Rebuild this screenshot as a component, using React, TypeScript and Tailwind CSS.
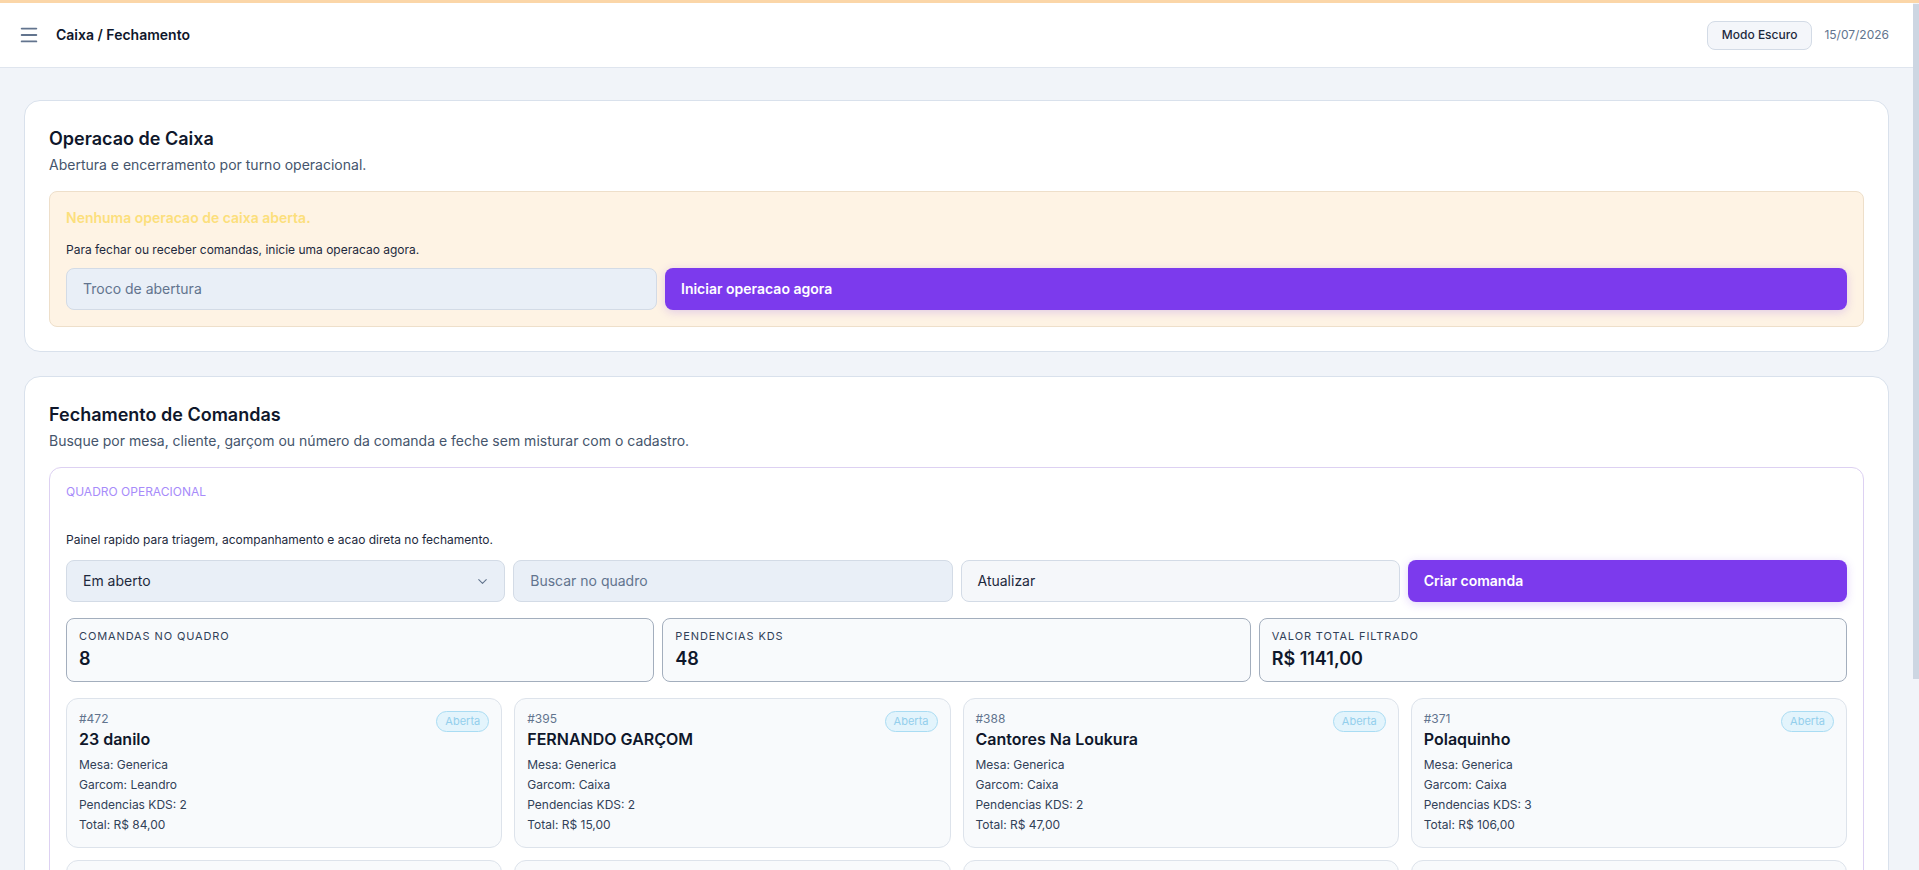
import React from "react";
import { Menu, ChevronDown } from "lucide-react";

type Comanda = {
  id: string;
  name: string;
  mesa: string;
  garcom: string;
  pend: number;
  total: string;
};

const comandas: Comanda[] = [
  { id: "#472", name: "23 danilo", mesa: "Generica", garcom: "Leandro", pend: 2, total: "R$ 84,00" },
  { id: "#395", name: "FERNANDO GARÇOM", mesa: "Generica", garcom: "Caixa", pend: 2, total: "R$ 15,00" },
  { id: "#388", name: "Cantores Na Loukura", mesa: "Generica", garcom: "Caixa", pend: 2, total: "R$ 47,00" },
  { id: "#371", name: "Polaquinho", mesa: "Generica", garcom: "Caixa", pend: 3, total: "R$ 106,00" },
  { id: "#362", name: "Balcão Rafael", mesa: "Generica", garcom: "Caixa", pend: 12, total: "R$ 312,00" },
  { id: "#358", name: "Mesa 5 - Carla", mesa: "05", garcom: "Leandro", pend: 9, total: "R$ 198,50" },
  { id: "#341", name: "Aniversario Ju", mesa: "12", garcom: "Caixa", pend: 11, total: "R$ 254,00" },
  { id: "#329", name: "Joao Pedro", mesa: "Generica", garcom: "Leandro", pend: 7, total: "R$ 124,50" },
];

function ComandaCard({ c }: { c: Comanda }) {
  return (
    <div className="rounded-xl border border-[#dde3eb] bg-[#f8fafc] p-3">
      <div className="flex items-start justify-between">
        <div>
          <div className="text-xs leading-4 text-slate-500">{c.id}</div>
          <div className="text-base font-semibold leading-6 text-slate-900">{c.name}</div>
        </div>
        <span className="rounded-full border border-[#a9dcf3] bg-[#e3f4fc] px-2 text-[11px] leading-[19px] text-[#93cfec]">
          Aberta
        </span>
      </div>
      <div className="mt-1 text-xs leading-5 text-slate-700">
        <div>Mesa: {c.mesa}</div>
        <div>Garcom: {c.garcom}</div>
        <div>Pendencias KDS: {c.pend}</div>
        <div>Total: {c.total}</div>
      </div>
    </div>
  );
}

function Stat({ label, value }: { label: string; value: string }) {
  return (
    <div className="rounded-lg border border-[#a3aebd] bg-[#f8fafc] px-3 py-2.5">
      <div className="text-[11px] uppercase leading-[14px] tracking-[0.08em] text-slate-700">{label}</div>
      <div className="mt-1 text-lg font-semibold leading-6 text-slate-900">{value}</div>
    </div>
  );
}

export default function App() {
  return (
    <div className="flex h-screen flex-col bg-[#f1f4f9] font-['Inter','Noto_Sans',sans-serif] text-slate-900">
      <div className="h-[3px] shrink-0 bg-[#fbd6a8]" />
      <div className="flex min-h-0 flex-1">
        <div className="min-w-0 flex-1 overflow-y-auto [scrollbar-width:none]">
          <header className="sticky top-0 z-10 flex h-[65px] items-center justify-between border-b border-[#dfe5ee] bg-white pl-[18px] pr-6">
            <div className="flex items-center gap-4">
              <Menu size={22} strokeWidth={2} className="text-slate-500" />
              <span className="text-sm font-semibold text-slate-900">Caixa / Fechamento</span>
            </div>
            <div className="flex items-center gap-3">
              <button className="h-[29px] rounded-lg border border-[#d3dbe6] bg-[#f4f6fa] px-3.5 text-xs font-medium text-slate-800">
                Modo Escuro
              </button>
              <span className="text-xs text-slate-500">15/07/2026</span>
            </div>
          </header>

          <main className="flex flex-col gap-6 px-6 pb-[70px] pt-8">
            <section className="rounded-2xl border border-[#d9e1ec] bg-white p-6">
              <h2 className="text-lg font-semibold leading-7 text-slate-900">Operacao de Caixa</h2>
              <p className="mt-0.5 text-sm leading-5 text-slate-600">Abertura e encerramento por turno operacional.</p>
              <div className="mt-4 rounded-lg border border-[#eedfca] bg-[#fef3e4] p-4">
                <div className="text-sm font-semibold leading-5 text-[#fcdf7c]">Nenhuma operacao de caixa aberta.</div>
                <p className="mt-3.5 text-xs leading-4 text-slate-800">
                  Para fechar ou receber comandas, inicie uma operacao agora.
                </p>
                <div className="mt-[10px] grid grid-cols-[1fr_2fr] gap-2">
                  <div className="flex h-[42px] items-center rounded-lg border border-[#d3dbe6] bg-[#e9eff7] px-4 text-sm text-slate-500">
                    Troco de abertura
                  </div>
                  <button className="flex h-[42px] items-center rounded-lg bg-[#7c3aed] px-4 text-left text-sm font-semibold text-white shadow-[0_2px_10px_rgba(124,58,237,0.22)]">
                    Iniciar operacao agora
                  </button>
                </div>
              </div>
            </section>

            <section className="rounded-2xl border border-[#d9e1ec] bg-white p-6">
              <h2 className="text-lg font-semibold leading-7 text-slate-900">Fechamento de Comandas</h2>
              <p className="mt-0.5 text-sm leading-5 text-slate-600">
                Busque por mesa, cliente, garçom ou número da comanda e feche sem misturar com o cadastro.
              </p>
              <div className="mt-4 rounded-xl border border-[#ddd1f2] bg-white p-4">
                <div className="text-xs uppercase leading-4 text-[#a78bfa]">Quadro operacional</div>
                <p className="mt-8 text-xs leading-4 text-slate-800">
                  Painel rapido para triagem, acompanhamento e acao direta no fechamento.
                </p>
                <div className="mt-3 grid grid-cols-4 gap-2">
                  <div className="flex h-[42px] items-center justify-between rounded-lg border border-[#d3dbe6] bg-[#e9eff7] pl-4 pr-3.5 text-sm text-slate-800">
                    <span>Em aberto</span>
                    <ChevronDown size={15} strokeWidth={1.75} className="text-slate-500" />
                  </div>
                  <div className="flex h-[42px] items-center rounded-lg border border-[#d3dbe6] bg-[#e9eff7] px-4 text-sm text-slate-500">
                    Buscar no quadro
                  </div>
                  <button className="flex h-[42px] items-center rounded-lg border border-[#d3dbe6] bg-[#f5f7fa] px-4 text-left text-sm text-slate-800">
                    Atualizar
                  </button>
                  <button className="flex h-[42px] items-center rounded-lg bg-[#7c3aed] px-4 text-left text-sm font-semibold text-white shadow-[0_2px_10px_rgba(124,58,237,0.22)]">
                    Criar comanda
                  </button>
                </div>
                <div className="mt-4 grid grid-cols-3 gap-2">
                  <Stat label="Comandas no quadro" value="8" />
                  <Stat label="Pendencias KDS" value="48" />
                  <Stat label="Valor total filtrado" value="R$ 1141,00" />
                </div>
                <div className="mt-4 grid grid-cols-4 gap-3">
                  {comandas.map((c) => (
                    <ComandaCard key={c.id} c={c} />
                  ))}
                </div>
              </div>
            </section>
          </main>
        </div>
        <div className="flex w-[6px] shrink-0 flex-col bg-[#f1f4f9] pt-px">
          <div className="h-[675px] bg-[#cdd6e2]" />
        </div>
      </div>
    </div>
  );
}
